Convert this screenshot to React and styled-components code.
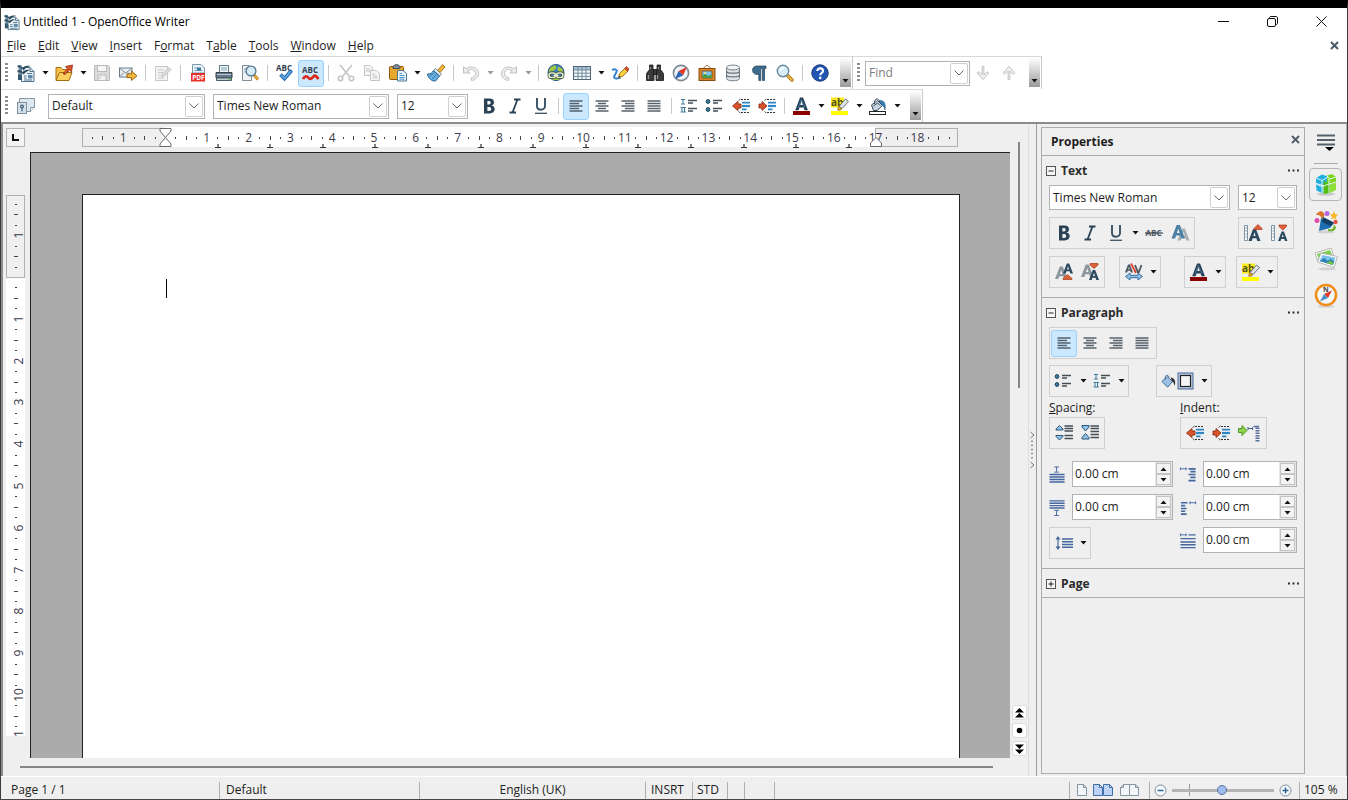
import React, { useEffect, useState } from "react";
import styled, { createGlobalStyle, css } from "styled-components";

const GlobalStyle = createGlobalStyle`
  * { box-sizing: border-box; }
  body {
    margin: 0;
    font-family: "Open Sans", "Noto Sans", sans-serif;
    font-size: 12px;
    line-height: 16px;
    color: #1d1d1d;
  }
  button, input, select {
    font: inherit;
    color: inherit;
  }
  svg { display: block; }
`;

/* ---------- icons ---------- */

const rows = (list, color = "#56616b", w = 1.5) => (
  <g stroke={color} strokeWidth={w}>
    {list.map(([x1, x2, y]) => (
      <path key={`${x1}-${y}`} d={`M${x1} ${y}H${x2}`} />
    ))}
  </g>
);

const writerDoc = (
  <g>
    <path d="M1.500 1V16H4.500V1Z" fill="#6f8ea2" />
    <path d="M4.500 3.500H13L17 7.500V17.500H4.500Z" fill="#edf3f6" stroke="#55758a" />
    <path d="M13 3.500V7.500H17" fill="none" stroke="#55758a" />
    <path d="M0.500 1.500C3 1 4.500 2.500 5.500 4C7.500 1.800 10.500 1.500 13.500 2C11 2.800 8.500 4 6.500 6.500C5 4 3 2.800 0.500 3.500Z" fill="#2c4a5e" />
    <path d="M0.500 6.500C3 5.500 4.500 6.800 5.500 8C7.500 6 10 5.500 13 6C10.500 7 8.500 8 6.500 10.500C5 8.500 3 7.800 0.500 8.500Z" fill="#2c4a5e" />
    <path d="M1 10.500C2.500 10 4 11 5 12.500V16H1Z" fill="#35566c" />
    <path d="M10 9.500H15M7 12H9.500M7 14H9.500M7 16H15" stroke="#4b7591" />
    <rect x="11" y="11" width="4.500" height="3.500" fill="#5d8aa8" />
  </g>
);

const bucket = (
  <g>
    <path d="M2.500 8L8.500 3.500L13.500 8.500L8 13.500H4.500Z" fill="#c9d6e2" stroke="#34495b" />
    <path d="M4.500 9L8.500 6L11 8.500M5.500 7C4.500 1.500 10 0 10.500 5" fill="none" stroke="#34495b" />
    <path d="M10.500 3.500C16 3 17 8 16 13C15 9.500 14 8.500 12.500 8Z" fill="#2f80bd" stroke="#1f4c70" strokeWidth="0.500" />
  </g>
);

const redUp = <path d="M14 0.500L18 4.500V5.500H10V4.500Z" fill="#e0603a" stroke="#a63a1a" strokeWidth="0.700" />;

const letterA = (x, y, s, color) => (
  <g transform={`translate(${x} ${y}) scale(${s})`}>
    <path d="M0 10L3.800 0H6.200L10 10H7.300L6.600 7.800H3.400L2.700 10ZM4 5.900H6L5 2.800Z" fill={color} fillRule="evenodd" />
  </g>
);

const arrowLeftRed = (
  <path d="M0.500 9L6 4.500V7H9V11H6V13.500Z" fill="#d9532c" stroke="#8c2f14" strokeWidth="0.900" />
);
const arrowRightRed = (
  <path d="M9 9L4 4.500V7H1V11H4V13.500Z" fill="#d9532c" stroke="#8c2f14" strokeWidth="0.900" />
);
const indentLines = (
  <g>
    <path d="M9 2.500H18M9 15.500H18" stroke="#333" strokeDasharray="2 1" />
    <path d="M10 5.700H18M10 12.300H14.500" stroke="#2c86c6" strokeWidth="1.800" />
    <path d="M10 9H18" stroke="#2c86c6" strokeWidth="2.200" />
    <path d="M6.500 3.500L8.500 2M6.500 14.500L8.500 16" stroke="#555" />
  </g>
);

const highlight = (
  <g>
    <rect x="0" y="0.500" width="13" height="10" fill="#fdec1c" />
    <text x="0" y="9" fontSize="10" fontWeight="700" fill="#54511c">ab</text>
    <path d="M8 9.500L14.500 2L17.500 4.500L11 11.500Z" fill="#dfe3e6" stroke="#5b6770" strokeWidth="0.900" />
    <path d="M7.500 9L11 12L8.500 13.500L6.500 13Z" fill="#e0a020" stroke="#7d5b12" strokeWidth="0.500" />
    <rect x="0" y="14" width="17" height="4" fill="#ffff00" />
  </g>
);

const fontColor = (
  <g>
    {letterA(2.200, 0.500, 1.270, "#24425a")}
    <path d="M5 11L8.500 2.500L12 11" fill="none" stroke="#5b86a6" strokeWidth="0.700" />
    <rect x="0" y="14" width="17" height="4" fill="#8b0000" />
  </g>
);

const bulletLines = (
  <g>
    <circle cx="2" cy="4.500" r="1.900" fill="#3f7c9d" stroke="#1f4256" />
    <circle cx="2" cy="12.500" r="1.900" fill="#3f7c9d" stroke="#1f4256" />
    {rows([[7, 16, 3.5], [7, 12, 6], [7, 16, 11.5], [7, 12, 14]], "#454e55")}
  </g>
);

const numberLines = (
  <g>
    <path d="M1 2.500H5M3 2.500V7M1 7H5M0.500 10.500H6M2 10.500V15M4.500 10.500V15M0.500 15H6" stroke="#3f7c9d" />
    {rows([[8, 17, 3.5], [8, 13, 6], [8, 17, 11.5], [8, 13, 14]], "#454e55")}
  </g>
);

const glyphs = {
  doc: writerDoc,
  open: (
    <g>
      <path d="M1 16V3.500H6L7.500 5.500H13V16Z" fill="#f6c24a" stroke="#a76f13" />
      <path d="M1 16.500L4.500 8.500H17L14 16.500Z" fill="#fbcf5d" stroke="#a76f13" />
      <path d="M8 9.500L12.500 5L10.500 2.500L17.500 1L16.500 8L14.500 6.200L10 10.500Z" fill="#d9542a" stroke="#8e2c10" strokeWidth="0.800" />
    </g>
  ),
  save: (
    <g fill="none" stroke="#b9b9b9">
      <path d="M1.500 1.500H15L16.500 3V16.500H1.500Z" fill="#dcdcdc" />
      <rect x="4.500" y="1.500" width="9" height="6" fill="#f7f7f7" />
      <rect x="5" y="11" width="8" height="5.500" fill="#f3f3f3" />
      <path d="M7 12.500V15" />
    </g>
  ),
  mail: (
    <g>
      <rect x="0.500" y="4" width="12.500" height="9" fill="#e9eff3" stroke="#6b7d8b" />
      <path d="M1 4.500L6.800 9L12.500 4.500M1 12.500L5 8.500M12.500 12.500L9 8.500" fill="none" stroke="#6b7d8b" strokeWidth="0.900" />
      <path d="M8 9.800H12.500V7L18 11.800L12.500 16.500V13.700H8Z" fill="#f3b93a" stroke="#8c5c0e" strokeWidth="0.900" />
    </g>
  ),
  edit: (
    <g stroke="#c8c8c8" fill="none">
      <rect x="1.500" y="2.500" width="12" height="14" fill="#f3f3f3" />
      <path d="M4 6H10M4 8.500H9M4 11H7M4 14H10" />
      <path d="M7.500 13L8.500 10L15 3.500L17 5.500L10.500 12Z" fill="#dadada" />
    </g>
  ),
  pdf: (
    <g>
      <path d="M3.500 0.500H12L15.500 4V9H3.500Z" fill="#eaf2f7" stroke="#7b98a8" />
      <path d="M5.500 4H9M5.500 6.500H13" stroke="#6aa0c0" />
      <rect x="8" y="3.500" width="4" height="3" fill="#3c7ba0" />
      <rect x="2" y="9" width="14" height="8.500" fill="#e5302c" />
      <text x="3.200" y="15.800" fontSize="6.500" fontWeight="700" fill="#fff">PDF</text>
    </g>
  ),
  print: (
    <g>
      <path d="M4.500 8V1.500H13.500V8" fill="#f7fafc" stroke="#5e7382" />
      <path d="M6 4H12M6 6H12" stroke="#7aa0b8" />
      <path d="M1 8.500H17V14H1Z" fill="#65798a" stroke="#34444f" />
      <path d="M2 10.500H16" stroke="#b8c7d1" />
      <path d="M1.500 14H16.500V16.500H1.500Z" fill="#c4ced5" stroke="#4a5b67" />
      <circle cx="14.500" cy="15.200" r="1" fill="#57b544" />
    </g>
  ),
  preview: (
    <g>
      <path d="M1.500 1.500H8L10.500 4V16.500H1.500Z" fill="#eef3f6" stroke="#7d8c97" />
      <path d="M3 5H6M3 8H5" stroke="#8aa2b1" />
      <path d="M13 11L17 15.500" stroke="#a8701c" strokeWidth="3" />
      <path d="M13.500 11.500L16.800 15.200" stroke="#f1b73d" strokeWidth="1.600" />
      <circle cx="10" cy="7" r="4.900" fill="#d5ecf7" stroke="#55768d" strokeWidth="1.300" />
    </g>
  ),
  spell: (
    <g>
      <text x="0" y="6.500" fontSize="8" fontWeight="700" fill="#33414d">ABC</text>
      <path d="M4.500 10.500L8.500 14.500L15.500 6.500" fill="none" stroke="#1f62a0" strokeWidth="3.800" />
      <path d="M5 11L8.500 14.300L15 7" fill="none" stroke="#58a5e0" strokeWidth="2" />
    </g>
  ),
  autospell: (
    <g>
      <text x="0" y="9" fontSize="8" fontWeight="700" fill="#33414d">ABC</text>
      <path d="M1 15C3 11.500 5 12 6.500 13.800S10 14.500 11.500 12.500S14.500 12.500 16.500 15" fill="none" stroke="#d92a1c" strokeWidth="2.800" />
    </g>
  ),
  cut: (
    <g fill="none" stroke="#c4c4c4" strokeWidth="1.600">
      <path d="M3 1L12.500 12.500M15 1L5.500 12.500" />
      <circle cx="3.500" cy="14.500" r="2.200" />
      <circle cx="14.500" cy="14.500" r="2.200" />
    </g>
  ),
  copy: (
    <g stroke="#c4c4c4" fill="#f6f6f6">
      <path d="M1.500 1.500H7L9.500 4V11.500H1.500Z" />
      <path d="M3 5H7M3 7H7" />
      <path d="M7.500 6.500H13.500L16.500 9.500V16.500H7.500Z" />
      <path d="M9.500 10H12M9.500 12H14.500M9.500 14H14.500" />
    </g>
  ),
  paste: (
    <g>
      <rect x="0.500" y="2.500" width="14" height="13" rx="1" fill="#e7a62c" stroke="#8a5a12" />
      <path d="M4 4.500V2.500L6 0.800H9L11 2.500V4.500Z" fill="#7f8d96" stroke="#46525a" />
      <path d="M8.500 6.500H14L17.500 9.500V17H8.500Z" fill="#e8f3fa" stroke="#4f7690" />
      <path d="M10.500 9.500H13M10.500 11.500H15.500M10.500 13.500H15.500M10.500 15.200H15.500" stroke="#4c93c2" />
    </g>
  ),
  brush: (
    <g>
      <path d="M10.500 6.500L15.500 0.500L18 3L13 8.500Z" fill="#f2b632" stroke="#956211" strokeWidth="0.800" />
      <path d="M8.500 4.500L14.500 10L12.500 12L6.500 6.500Z" fill="#e7edf1" stroke="#51646f" strokeWidth="0.800" />
      <path d="M6.500 6.500L12.500 12L8.500 17C5 17.500 1 14.500 0.500 10C4 10 5 9 6.500 6.500Z" fill="#6db0e2" stroke="#235e91" />
      <path d="M3 11.500C5 11 6.500 10 7.500 8.500M5 14.500C7 13.500 8.500 12 9.500 10.500" stroke="#2c70a8" fill="none" />
    </g>
  ),
  undo: (
    <path d="M1.500 2.500V9H8L5.800 6.800C9 4.500 13.500 5.500 13.500 9.500C13.500 12 11.500 13.500 9 14L9.500 16.500C13.500 16 16.500 13.500 16.500 9.500C16.500 3.500 9 1 4 4.800Z" fill="#ececec" stroke="#c2c2c2" />
  ),
  redo: (
    <path d="M16.500 2.500V9H10L12.200 6.800C9 4.500 4.500 5.500 4.500 9.500C4.500 12 6.500 13.500 9 14L8.500 16.500C4.500 16 1.500 13.500 1.500 9.500C1.500 3.500 9 1 14 4.800Z" fill="#ececec" stroke="#c2c2c2" />
  ),
  globe: (
    <g>
      <circle cx="9" cy="8.500" r="8" fill="#3e7fc0" stroke="#1f4e7c" />
      <path d="M4 3L8.500 1L9.500 4L6.500 7L2 8C1.800 6.500 2.500 4.500 4 3ZM11 2.500L15 4.500L16.500 9L13 8.500L10.500 6ZM4 14H14L12 16L6 16Z" fill="#a3c644" />
      <rect x="2" y="9" width="6.500" height="4.500" rx="2.200" fill="none" stroke="#33452a" strokeWidth="2.800" />
      <rect x="9.500" y="9" width="6.500" height="4.500" rx="2.200" fill="none" stroke="#33452a" strokeWidth="2.800" />
      <rect x="2" y="9" width="6.500" height="4.500" rx="2.200" fill="none" stroke="#e7edd4" strokeWidth="1.500" />
      <rect x="9.500" y="9" width="6.500" height="4.500" rx="2.200" fill="none" stroke="#e7edd4" strokeWidth="1.500" />
      <path d="M6.500 11.300H11.500" stroke="#e7edd4" strokeWidth="1.400" />
    </g>
  ),
  table: (
    <g>
      <rect x="0.500" y="2.500" width="17" height="13" fill="#f5f8fa" stroke="#4f6674" />
      <rect x="1" y="3" width="16" height="3" fill="#aac2d2" />
      <path d="M1 6H17M1 9.200H17M1 12.400H17M5 3V15M9 3V15M13 3V15" stroke="#6f8b9d" />
    </g>
  ),
  draw: (
    <g>
      <path d="M1 6C4 4.500 7 5.500 5 9C3.500 12 1.500 14 5 14.500C7 14.800 8 14 9.500 13.500" fill="none" stroke="#2f7fd6" strokeWidth="1.900" />
      <path d="M7.500 13.500L8.500 9.500L14 4L17 7L11.500 12.500Z" fill="#f8cf3d" stroke="#8a5a12" strokeWidth="0.800" />
      <path d="M13.500 4.500L15.500 2.500L18 5L16.500 7.200Z" fill="#e4523c" stroke="#8e2c10" strokeWidth="0.700" />
      <path d="M7.500 13.500L8 11.500L9.500 13Z" fill="#333" />
    </g>
  ),
  binoculars: (
    <g fill="#3a3a3a" stroke="#161616" strokeWidth="0.800">
      <path d="M3.500 1H7V5.500L8 8V16.500H0.500V9.500L3.500 5.500Z" />
      <path d="M14.500 1H11V5.500L10 8V16.500H17.500V9.500L14.500 5.500Z" />
      <rect x="7.500" y="5.500" width="3" height="5" />
      <path d="M2.500 11V15M11.500 11V15M4.500 3V5M12.500 3V5" stroke="#9a9a9a" strokeWidth="1.200" />
    </g>
  ),
  compass: (
    <g>
      <circle cx="9" cy="9" r="7.600" fill="#eef4f8" stroke="#7d8a94" strokeWidth="1.600" />
      <path d="M15 3L11 11.500L6.500 7Z" fill="#e0392a" />
      <path d="M3 15L6.500 7L11 11.500Z" fill="#2a66b5" />
    </g>
  ),
  gallery: (
    <g>
      <path d="M5 4.500L9 1L13 4.500" fill="none" stroke="#98784a" />
      <rect x="1" y="4.500" width="16" height="12" fill="#d98327" stroke="#8a4c10" />
      <rect x="4" y="7" width="10" height="7" fill="#7cc0ea" stroke="#7a430e" strokeWidth="0.700" />
      <path d="M4.400 13.700V11.500L7 10L10 12L13.600 10.500V13.700Z" fill="#3f9c3a" />
      <circle cx="7" cy="9" r="1" fill="#fdf17a" />
    </g>
  ),
  database: (
    <g fill="#dfe3e6" stroke="#66727b" strokeWidth="0.900">
      <path d="M2.500 3.500V14.500C2.500 17.500 15.500 17.500 15.500 14.500V3.500" />
      <ellipse cx="9" cy="3.500" rx="6.500" ry="2.400" fill="#f3f5f6" />
      <path d="M2.500 7.200C2.500 9.800 15.500 9.800 15.500 7.200M2.500 11C2.500 13.500 15.500 13.500 15.500 11" fill="none" strokeWidth="1.300" />
    </g>
  ),
  pilcrow: (
    <path d="M7 2H16V4.500H14.500V16.500H12.500V4.500H10.800V16.500H8.800V10.500C5 10.800 2.500 9.200 2.500 6.300C2.500 3.500 4.500 2 7 2Z" fill="#3d6c8e" stroke="#1f4059" strokeWidth="0.700" />
  ),
  zoom: (
    <g>
      <path d="M11 11L16 16" stroke="#99661a" strokeWidth="3.400" strokeLinecap="round" />
      <path d="M11.800 11.800L16 16" stroke="#f3b93a" strokeWidth="1.900" strokeLinecap="round" />
      <circle cx="7" cy="7" r="5.700" fill="#d8effa" stroke="#6c8799" strokeWidth="1.400" />
      <path d="M4 6.500C4.500 4.500 6 3.800 8 4" stroke="#fff" strokeWidth="1.400" fill="none" />
    </g>
  ),
  help: (
    <g>
      <circle cx="9" cy="9" r="8.200" fill="#2456b4" stroke="#16366f" />
      <path d="M6.300 7C6.300 3.500 12 3.600 12 6.900C12 9 9.200 9 9.200 11.300" fill="none" stroke="#fff" strokeWidth="2.100" />
      <circle cx="9.200" cy="13.900" r="1.300" fill="#fff" />
    </g>
  ),
  down: <path d="M8 1.500H10V11L14 7.500L15.500 9L9 16.500L2.500 9L4 7.500L8 11Z" fill="#f0f0f0" stroke="#bcbcbc" />,
  up: <path d="M8 16.500H10V7L14 10.500L15.500 9L9 1.500L2.500 9L4 10.500L8 7Z" fill="#f0f0f0" stroke="#bcbcbc" />,
  styles: (
    <g>
      <path d="M2.500 1.500H17.500V10.500L13.500 14.500H2.500Z" fill="#dfe8ee" stroke="#8396a3" />
      <path d="M13.500 14.500V10.500H17.500" fill="#f8fbfd" stroke="#8396a3" />
      <rect x="0.500" y="5.500" width="9" height="11" fill="#d5e0e8" stroke="#7d92a1" />
      <path d="M5 14.500V8.500" stroke="#41617a" strokeWidth="1.200" />
      <circle cx="5" cy="9.500" r="2" fill="#41617a" />
      <circle cx="5" cy="9.500" r="0.700" fill="#e8eff4" />
    </g>
  ),
  bold: (
    <path d="M4 1.500H9.500C12.500 1.500 14 3.200 14 5.300C14 7 13.100 8.200 11.500 8.600C13.600 9 14.700 10.300 14.700 12.100C14.700 14.800 12.700 16.500 9.600 16.500H4ZM7.400 4V7.500H8.900C10 7.500 10.600 6.800 10.600 5.800C10.600 4.600 10 4 8.900 4ZM7.400 10V14H9.200C10.500 14 11.200 13.200 11.200 12C11.200 10.700 10.400 10 9.200 10Z" fill="#2a4254" fillRule="evenodd" />
  ),
  italic: <path d="M8 2.500H14.500M3.500 15.500H10M11.500 2.500L6.500 15.500" stroke="#2a4254" strokeWidth="1.800" fill="none" />,
  underline: (
    <g fill="none" stroke="#3a5163">
      <path d="M5 1V9C5 14 13 14 13 9V1" strokeWidth="1.900" />
      <path d="M3 16.300H15" strokeWidth="1.300" />
    </g>
  ),
  alignLeft: rows([[2.5, 15.5, 4], [2.5, 12, 6.5], [2.5, 15.5, 9], [2.5, 12, 11.5], [2.5, 15.5, 14]]),
  alignCenter: rows([[2.5, 15.5, 4], [5, 13, 6.5], [2.5, 15.5, 9], [5, 13, 11.5], [2.5, 15.5, 14]]),
  alignRight: rows([[2.5, 15.5, 4], [6, 15.5, 6.5], [2.5, 15.5, 9], [6, 15.5, 11.5], [2.5, 15.5, 14]]),
  justify: rows([[2.5, 15.5, 4], [2.5, 15.5, 6.5], [2.5, 15.5, 9], [2.5, 15.5, 11.5], [2.5, 15.5, 14]]),
  numbering: numberLines,
  bullets: bulletLines,
  outdent: <g>{indentLines}{arrowLeftRed}</g>,
  indent: <g>{indentLines}{arrowRightRed}</g>,
  fontColor,
  highlight,
  fill: (
    <g>
      {bucket}
      <rect x="0.500" y="14.500" width="16" height="3" fill="#fff" stroke="#222" />
    </g>
  ),
  strike: (
    <g>
      <text x="0.500" y="12" fontSize="8" fontWeight="700" fill="#4a5660">ABC</text>
      <path d="M0 9H18" stroke="#39434b" strokeWidth="1.200" />
    </g>
  ),
  shadow: (
    <g>
      {letterA(6.500, 4.500, 1.200, "#a7afb5")}
      {letterA(0.500, 1, 1.350, "#4b81a6")}
    </g>
  ),
  grow: (
    <g>
      <path d="M0.500 1.500H3.500V16.500H0.500ZM1.500 4H3M1.500 7H3M1.500 10H3M1.500 13H3" fill="#fff" stroke="#6c8799" strokeWidth="0.900" />
      {letterA(4.500, 5, 1.200, "#2b4a61")}
      {redUp}
    </g>
  ),
  shrink: (
    <g>
      <path d="M1.500 1.500H4.500V16.500H1.500ZM2.500 4H4M2.500 7H4M2.500 10H4M2.500 13H4" fill="#fff" stroke="#6c8799" strokeWidth="0.900" />
      {letterA(8, 7.500, 0.950, "#2b4a61")}
      <path d="M9 1H16.500V2.500L12.800 6L9 2.500Z" fill="#e0603a" stroke="#a63a1a" strokeWidth="0.700" />
    </g>
  ),
  superscript: (
    <g>
      {letterA(0, 3.500, 1.250, "#8d979e")}
      {letterA(8, 0.500, 1, "#2b4a61")}
      <path d="M12.500 11.500L17 15.500V16.500H8V15.500Z" fill="#e0603a" stroke="#a63a1a" strokeWidth="0.700" />
    </g>
  ),
  subscript: (
    <g>
      {letterA(0, 1.500, 1.250, "#8d979e")}
      {letterA(8, 7, 1, "#2b4a61")}
      <path d="M9 0.500H17V2L13 5.500L9 2Z" fill="#e0603a" stroke="#a63a1a" strokeWidth="0.700" />
    </g>
  ),
  charSpacing: (
    <g>
      {letterA(0, 1.500, 0.800, "#4a5660")}
      <path d="M10 2L12.800 9H13.800L16.500 2" fill="none" stroke="#4a5660" strokeWidth="1.800" />
      <path d="M6 0.500L11 10" stroke="#e0392a" strokeWidth="1.700" />
      <path d="M0.500 13.500L5 10V12.300H13V10L17.500 13.500L13 17V14.700H5V17Z" fill="#8fc3e8" stroke="#2a6393" strokeWidth="0.900" />
    </g>
  ),
  paraFill: (
    <g>
      <path d="M1 9.500L7 4L13 9.500L7.500 16Z" fill="#9dc1e6" stroke="#35618f" />
      <path d="M5 7.500C3.500 2 8.500 0.500 9 5.500" fill="none" stroke="#35618f" />
      <path d="M11 5C15 5.500 17 9 15.500 14.500C14.500 11 13.500 10 12 9Z" fill="#333" />
    </g>
  ),
  square: (
    <g>
      <rect x="1" y="1" width="15" height="16" fill="#b9c8de" stroke="#4a6999" />
      <rect x="3.500" y="3.500" width="10" height="11" fill="#f4f4f4" stroke="#222" strokeWidth="1.200" />
    </g>
  ),
  spaceUp: (
    <g>
      <path d="M4.500 1.500L8 5V6H1V5ZM4.500 16L8 12.500V11.500H1V12.500Z" fill="#8fc3e8" stroke="#2a5577" />
      {rows([[9.5, 18, 2], [9.5, 18, 4.5], [9.5, 18, 7], [9.5, 18, 11.5], [9.5, 18, 14.5]], "#454e55")}
    </g>
  ),
  spaceDown: (
    <g>
      <path d="M4.500 7L8 3V1.500H1V3ZM4.500 9.500L8 13.500V15H1V13.500Z" fill="#8fc3e8" stroke="#2a5577" />
      {rows([[9.5, 18, 2], [9.5, 18, 4.5], [9.5, 18, 7.5], [9.5, 18, 10.5], [9.5, 18, 13.5]], "#454e55")}
    </g>
  ),
  hanging: (
    <g>
      <path d="M0.500 4.500H4V1.500L9 6.500L4 11.500V8.500H0.500Z" fill="#8ed44a" stroke="#3f8a17" strokeWidth="0.900" />
      <path d="M10 4.500H14.500M10 3V6M14.500 3V6" stroke="#4a6288" />
      <path d="M15.500 2.500H21" stroke="#5a73a0" strokeWidth="1.600" />
      <path d="M19.500 3.500V18" stroke="#5a73a0" strokeWidth="4" strokeDasharray="1.500 1" />
    </g>
  ),
  above: (
    <g stroke="#4467a0">
      <path d="M5.500 1H10.500M8 1V6M5.500 6.500H10.500" />
      <path d="M0.500 9H16.500M0.500 11.700H16.500M0.500 14.300H16.500M0.500 17H16.500" strokeWidth="1.500" />
    </g>
  ),
  below: (
    <g stroke="#4467a0">
      <path d="M0.500 2H16.500M0.500 4.500H16.500M0.500 7H16.500M0.500 9.500H16.500" strokeWidth="1.500" />
      <path d="M5.500 12H10.500M8 12V17M5.500 17.500H10.500" />
    </g>
  ),
  before: (
    <g stroke="#4467a0">
      <path d="M0.500 3H6.500M0.500 1.500V4.500M6.500 1.500V4.500" />
      <path d="M9 3H16.500M11 6H16.500M9 9H16.500M11 12H16.500M9 15.500H16.500" strokeWidth="1.700" />
    </g>
  ),
  after: (
    <g stroke="#4467a0">
      <path d="M10.500 4H16.500M10.500 2.500V5.500M16.500 2.500V5.500" />
      <path d="M1 4H8M1 7H5.500M1 10H7M1 13H5.500M1 16H7" strokeWidth="1.700" />
    </g>
  ),
  firstLine: (
    <g stroke="#4467a0">
      <path d="M0.500 3H6.500M0.500 1.500V4.500M6.500 1.500V4.500" />
      <path d="M9 3H16.500M0.500 7H16.500M0.500 10.500H16.500M0.500 13.500H16.500M0.500 16.500H16.500" strokeWidth="1.500" />
    </g>
  ),
  lineSpacing: (
    <g stroke="#4467a0">
      <path d="M3 4V14" strokeWidth="1.200" />
      <path d="M3 2L5.500 5.500H0.500ZM3 16L5.500 12.500H0.500Z" fill="#4467a0" stroke="none" />
      <path d="M7 5H18M7 7.800H18M7 10.500H18M7 13.300H18" strokeWidth="1.400" />
    </g>
  ),
};

const Icon = ({ name, size = 18 }) => (
  <svg width={size} height={size} viewBox="0 0 18 18" overflow="visible" aria-hidden="true">
    {glyphs[name]}
  </svg>
);

const Caret = ({ color = "#111" }) => (
  <svg width="7" height="4" viewBox="0 0 7 4" aria-hidden="true">
    <path d="M0.500 0H6.500L3.500 3.500Z" fill={color} />
  </svg>
);

/* ---------- window frame ---------- */

const Window = styled.div`
  display: flex;
  flex-direction: column;
  height: 100vh;
  overflow: hidden;
  background: #fff;
  border-top: 8px solid #000;
  border-left: 1px solid #3c3c3c;
  border-right: 1px solid #3c3c3c;
  border-bottom: 1px solid #4a4444;
`;

const TitleBar = styled.header`
  display: flex;
  align-items: center;
  flex: none;
  height: 27px;
  padding: 0 3px;
  gap: 3px;
`;

const Title = styled.h1`
  flex: 1;
  margin: 0;
  font-size: 12px;
  font-weight: 400;
  color: #000;
`;

const CaptionButton = styled.button`
  display: flex;
  align-items: center;
  justify-content: center;
  width: 46px;
  height: 25px;
  padding: 0;
  border: 0;
  background: none;
`;

const MenuBar = styled.nav`
  display: flex;
  flex: none;
  height: 21px;
  align-items: center;
`;

const MenuItem = styled.button`
  padding: 0 6px;
  border: 0;
  background: none;
`;

const CloseDocument = styled.button`
  display: flex;
  margin-left: auto;
  padding: 0 8px;
  border: 0;
  background: none;
`;

/* ---------- toolbars ---------- */

const ToolbarRow = styled.div`
  display: flex;
  flex: none;
  height: 33px;
`;

const Toolbar = styled.div`
  display: flex;
  align-items: center;
  padding: 0 1px 0 4px;
  border-top: 1px solid #d9d9d9;
  border-right: 1px solid #c9c9c9;
`;

const Grip = styled.span`
  width: 3px;
  height: 20px;
  margin-right: 5px;
  background: repeating-linear-gradient(#8c8c8c 0 2px, transparent 2px 4px);
`;

const ToolButton = styled.button`
  display: flex;
  align-items: center;
  justify-content: center;
  flex: none;
  width: 26px;
  height: 27px;
  padding: 0;
  border: 1px solid transparent;
  border-radius: 3px;
  background: none;
  ${(p) =>
    p.$active &&
    css`
      border-color: #99d1ff;
      background: #cce8ff;
    `}
`;

const ArrowButton = styled.button`
  display: flex;
  align-items: center;
  justify-content: center;
  flex: none;
  width: 12px;
  height: 27px;
  padding: 0;
  border: 0;
  background: none;
`;

const Divider = styled.span`
  flex: none;
  width: 1px;
  height: 16px;
  margin: 0 4px;
  background: #c8c8c8;
`;

const Expander = styled.button`
  display: flex;
  align-items: flex-end;
  justify-content: center;
  width: 11px;
  height: 28px;
  margin-left: 7px;
  padding: 0 0 4px;
  border: 0;
  background: linear-gradient(#fbfbfb, #9b9b9b);
`;

const ComboBox = styled.label`
  display: flex;
  flex: ${(p) => (p.$width ? "none" : "1")};
  width: ${(p) => (p.$width ? `${p.$width}px` : "auto")};
  height: 25px;
  margin-right: ${(p) => p.$gap || 0}px;
  padding: 1px;
  border: 1px solid #b1b1b8;
  background: #fff;

  select, input {
    flex: 1;
    min-width: 0;
    padding: 0 2px;
    border: 0;
    outline: 0;
    appearance: none;
    background: none;
  }
  input::placeholder {
    color: #7c7c7c;
    opacity: 1;
  }
`;

const ComboArrow = styled.span`
  display: flex;
  align-items: center;
  justify-content: center;
  width: 18px;
  border: 1px solid #cfcfcf;
  border-radius: 2px;
  pointer-events: none;
`;

const Combo = ({ label, value, width, gap }) => (
  <ComboBox $width={width} $gap={gap}>
    <select aria-label={label} defaultValue={value}>
      <option>{value}</option>
    </select>
    <ComboArrow>
      <Chevron />
    </ComboArrow>
  </ComboBox>
);

const Chevron = () => (
  <svg width="10" height="6" viewBox="0 0 10 6" aria-hidden="true">
    <path d="M0.500 0.500L5 5L9.500 0.500" fill="none" stroke="#666" />
  </svg>
);

const standardTools = [
  ["doc", "New", "menu"],
  ["open", "Open", "menu"],
  ["save", "Save"],
  ["mail", "E-mail"],
  "|",
  ["edit", "Edit File"],
  "|",
  ["pdf", "Export as PDF"],
  ["print", "Print"],
  ["preview", "Page Preview"],
  "|",
  ["spell", "Spelling"],
  ["autospell", "AutoSpellcheck", "active"],
  "|",
  ["cut", "Cut"],
  ["copy", "Copy"],
  ["paste", "Paste", "menu"],
  ["brush", "Format Paintbrush"],
  "|",
  ["undo", "Undo", "menu-off"],
  ["redo", "Redo", "menu-off"],
  "|",
  ["globe", "Hyperlink"],
  ["table", "Insert Table", "menu"],
  ["draw", "Show Draw Functions"],
  "|",
  ["binoculars", "Find and Replace"],
  ["compass", "Navigator"],
  ["gallery", "Gallery"],
  ["database", "Data Sources"],
  ["pilcrow", "Nonprinting Characters"],
  ["zoom", "Zoom"],
  "|",
  ["help", "Help"],
];

const formatTools = [
  ["bold", "Bold"],
  ["italic", "Italic"],
  ["underline", "Underline"],
  "|",
  ["alignLeft", "Align Left", "active"],
  ["alignCenter", "Centered"],
  ["alignRight", "Align Right"],
  ["justify", "Justified"],
  "|",
  ["numbering", "Numbering On/Off"],
  ["bullets", "Bullets On/Off"],
  ["outdent", "Decrease Indent"],
  ["indent", "Increase Indent"],
  "|",
  ["fontColor", "Font Color", "menu"],
  ["highlight", "Highlighting", "menu"],
  ["fill", "Background Color", "menu"],
];

const Tools = ({ items }) =>
  items.map((item, i) => {
    if (item === "|") return <Divider key={i} />;
    const [name, label, mode = ""] = item;
    return (
      <React.Fragment key={name}>
        <ToolButton aria-label={label} $active={mode === "active"}>
          <Icon name={name} />
        </ToolButton>
        {mode.startsWith("menu") && (
          <ArrowButton aria-label={`${label} options`}>
            <Caret color={mode === "menu" ? "#111" : "#9a9a9a"} />
          </ArrowButton>
        )}
      </React.Fragment>
    );
  });

/* ---------- document area ---------- */

const Work = styled.main`
  display: flex;
  flex: 1;
  min-height: 0;
  border-top: 2px solid #8b8b8b;
  border-left: 2px solid #8b8b8b;
  background: #efefef;
`;

const Editor = styled.section`
  display: flex;
  flex-direction: column;
  flex: 1;
  min-width: 0;
`;

const RulerRow = styled.div`
  display: flex;
  flex: none;
  height: 28px;
  padding: 3px 0 0 3px;
  overflow: hidden;
`;

const TabButton = styled.button`
  flex: none;
  width: 19px;
  height: 19px;
  margin: 1px 57px 0 0;
  padding: 5px;
  border: 1px solid #b3b3b3;
  background: #f3f3f3;
`;

const CanvasRow = styled.div`
  display: flex;
  flex: 1;
  min-height: 0;
`;

const SideRuler = styled.div`
  flex: none;
  width: 27px;
  margin-bottom: 22px;
  padding: 43px 0 0 3px;
  overflow: hidden;
`;

const Canvas = styled.div`
  flex: 1;
  padding: 41px 0 0 51px;
  overflow: hidden;
  border-top: 1px solid #222;
  border-left: 1px solid #222;
  background: #ababab;
`;

const Paper = styled.article`
  width: 878px;
  height: 1242px;
  padding: 84px 83px;
  border: 1px solid #222;
  background: #fff;
`;

const TextCursor = styled.div`
  width: 1px;
  height: 19px;
  background: #000;
`;

const HScroll = styled.div`
  flex: none;
  height: 18px;
  padding: 8px 17px 0;
`;

const HThumb = styled.div`
  height: 2px;
  background: #868686;
`;

const VScroll = styled.div`
  display: flex;
  flex-direction: column;
  align-items: center;
  flex: none;
  width: 19px;
  padding: 18px 0 20px;
  gap: 3px;
  border-right: 1px solid #dedede;
`;

const VThumb = styled.div`
  width: 2px;
  height: 40%;
  margin-bottom: auto;
  background: #868686;
`;

const NavButton = styled.button`
  display: flex;
  align-items: center;
  justify-content: center;
  width: 15px;
  height: 15px;
  padding: 0;
  border: 1px solid #dcdcdc;
  border-radius: 3px;
  background: #fff;
`;

const Splitter = styled.div`
  display: flex;
  align-items: center;
  justify-content: center;
  flex: none;
  width: 8px;
  border-right: 1px solid #9c9c9c;
`;

const CM = 41.8;
const TAB = 52.6;

const HorizontalRuler = () => {
  const origin = 83;
  const marks = [];
  for (let q = -7; q < 76; q++) {
    const x = origin + (q * CM) / 4;
    if (q === 0) continue;
    if (q % 4 === 0) {
      marks.push(
        <text key={q} x={x} y="15" fontSize="12" textAnchor="middle" fill="#3a3a4a">
          {Math.abs(q / 4)}
        </text>
      );
    } else {
      const half = q % 2 === 0;
      marks.push(
        <path key={q} d={`M${Math.round(x) + 0.5} ${half ? 9 : 10}v${half ? 4 : 2}`} stroke="#444" />
      );
    }
  }
  return (
    <svg width="878" height="22" overflow="visible" aria-label="Horizontal ruler" role="img">
      <rect x="83" y="0" width="711" height="20" fill="#fff" />
      <rect x="0.500" y="1.500" width="83" height="18" fill="#efefef" stroke="#b0b0b0" />
      <rect x="793.500" y="1.500" width="82" height="18" fill="#efefef" stroke="#b0b0b0" />
      {marks}
      {Array.from({ length: 13 }, (_, k) => Math.round(origin + (k + 1) * TAB)).map((x) => (
        <path key={x} d={`M${x} 17v3M${x - 3} 20.500h6`} stroke="#333" strokeWidth="1.200" />
      ))}
      <g fill="#fff" stroke="#6a6a6a">
        <path d="M78 1.500H89V4L83.500 10.500L78 4Z" />
        <path d="M83.500 10.500L89 17V19.500H78V17Z" />
        <path d="M794 10.500L799.500 16V19.500H788.500V16Z" />
      </g>
    </svg>
  );
};

// last centimetre that still fits between the ruler's origin and the status bar
const lastVisibleCm = () => Math.min(25, Math.floor((window.innerHeight - 340) / CM));

const VerticalRuler = () => {
  const [last, setLast] = useState(lastVisibleCm);

  useEffect(() => {
    const update = () => setLast(lastVisibleCm());
    window.addEventListener("resize", update);
    return () => window.removeEventListener("resize", update);
  }, []);

  const origin = 82;
  const marks = [];
  for (let q = -7; q <= last * 4; q++) {
    const y = origin + (q * CM) / 4;
    if (q === 0) continue;
    if (q % 4 === 0) {
      marks.push(
        <text
          key={q}
          transform={`translate(17 ${Math.round(y)}) rotate(-90)`}
          fontSize="12"
          textAnchor="middle"
          fill="#3a3a4a"
        >
          {Math.abs(q / 4)}
        </text>
      );
    } else {
      const half = q % 2 === 0;
      marks.push(
        <path key={q} d={`M${half ? 8 : 9} ${Math.round(y) + 0.5}h${half ? 4 : 2}`} stroke="#444" />
      );
    }
  }
  return (
    <svg width="24" height="1200" aria-label="Vertical ruler" role="img">
      <rect width="19" height="1200" fill="#fff" />
      <rect x="0.500" y="0.500" width="18" height="82" fill="#efefef" stroke="#b0b0b0" />
      {marks}
    </svg>
  );
};

/* ---------- sidebar ---------- */

const Sidebar = styled.aside`
  display: flex;
  flex-direction: column;
  flex: none;
  width: 264px;
  margin: 3px 0 2px 4px;
  border: 1px solid #acacac;
`;

const Deck = styled.header`
  display: flex;
  align-items: center;
  justify-content: space-between;
  height: 28px;
  padding: 0 4px 0 9px;
  border-bottom: 1px solid #acacac;

  h2 {
    margin: 0;
    font-size: 12px;
    line-height: 16px;
  }
`;

const PlainButton = styled.button`
  display: flex;
  padding: 0;
  border: 0;
  background: none;
`;

const SectionHead = styled.div`
  display: flex;
  align-items: center;
  gap: 5px;
  height: 28px;
  padding: 1px 5px 0 4px;

  h3 {
    flex: 1;
    margin: 0;
    font-size: 12px;
    line-height: 16px;
    color: #2b2b2b;
  }
`;

const SectionBody = styled.div`
  padding: 1px 7px 9px;
`;

const SectionBox = styled.section`
  border-bottom: 1px solid #acacac;
`;

const Line = styled.div`
  display: flex;
  gap: ${(p) => p.$gap || 0}px;
  margin-top: ${(p) => p.$top || 0}px;
`;

const Push = styled.span`
  margin-left: ${(p) => p.$by || 0}px;
`;

const Group = styled.div`
  display: flex;
  align-items: center;
  width: max-content;
  height: 32px;
  padding: 0 1px;
  border: 1px solid #cfcfcf;
`;

const TwoCol = styled.div`
  display: grid;
  grid-template-columns: 124px 1fr;
  column-gap: 7px;
  row-gap: ${(p) => p.$gap || 0}px;
  margin-top: ${(p) => p.$top || 0}px;
  align-items: start;
`;

const Field = styled.label`
  display: flex;
  align-items: center;
  gap: 6px;
`;

const SpinBox = styled.span`
  display: flex;
  flex: 1;
  height: 26px;
  border: 1px solid #b1b1b8;
  background: #fff;

  input {
    flex: 1;
    width: 0;
    min-width: 0;
    padding: 0 2px;
    border: 0;
    outline: 0;
    background: none;
  }
`;

const SpinButtons = styled.span`
  display: flex;
  flex-direction: column;
  width: 17px;
  padding: 1px;
  background: #e6e6e6;
`;

const SpinButton = styled.button`
  display: flex;
  align-items: center;
  justify-content: center;
  flex: 1;
  padding: 0;
  border: 1px solid #c4c4c4;
  background: #f3f3f3;

  svg {
    transform: ${(p) => (p.$up ? "rotate(180deg)" : "none")};
  }
`;

const TabBar = styled.nav`
  display: flex;
  flex-direction: column;
  align-items: center;
  flex: none;
  width: 42px;
  padding-top: 10px;
  gap: 4px;
  border-right: 1px solid #b5b5b5;
`;

const TabRule = styled.span`
  width: 24px;
  height: 1px;
  margin: 7px 0 0;
  background: #acacac;
`;

const DeckTab = styled.button`
  display: flex;
  align-items: center;
  justify-content: center;
  width: 33px;
  height: 33px;
  padding: 0;
  border: 1px solid ${(p) => (p.$active ? "#b5b5b5" : "transparent")};
  border-radius: 4px;
  background: none;
`;

const Spin = ({ icon, label }) => (
  <Field>
    <Icon name={icon} size={17} />
    <SpinBox>
      <input aria-label={label} defaultValue="0.00 cm" />
      <SpinButtons>
        <SpinButton $up aria-label={`Increase ${label}`}>
          <Caret />
        </SpinButton>
        <SpinButton aria-label={`Decrease ${label}`}>
          <Caret />
        </SpinButton>
      </SpinButtons>
    </SpinBox>
  </Field>
);

const Section = ({ title, open, children }) => {
  const [expanded, setExpanded] = useState(open);
  return (
    <SectionBox>
      <SectionHead>
        <PlainButton aria-label={`Toggle ${title}`} onClick={() => setExpanded(!expanded)}>
          <svg width="10" height="10" viewBox="0 0 10 10">
            <rect x="0.500" y="0.500" width="9" height="9" fill="#f6f6f6" stroke="#555" />
            <path d={expanded ? "M2.500 5H7.500" : "M2.500 5H7.500M5 2.500V7.500"} stroke="#222" />
          </svg>
        </PlainButton>
        <h3>{title}</h3>
        <PlainButton aria-label={`${title} options`}>
          <svg width="11" height="3" viewBox="0 0 11 3" fill="#333">
            <path d="M0 0.500H2V2.500H0ZM4.500 0.500H6.500V2.500H4.500ZM9 0.500H11V2.500H9Z" />
          </svg>
        </PlainButton>
      </SectionHead>
      {expanded && children}
    </SectionBox>
  );
};

/* ---------- status bar ---------- */

const StatusBar = styled.footer`
  display: flex;
  align-items: center;
  flex: none;
  height: 23px;
  padding-top: 4px;
  border-top: 1px solid #fff;
  background: #efefef;
`;

const Cell = styled.div`
  display: flex;
  align-items: center;
  justify-content: ${(p) => (p.$center ? "center" : "flex-start")};
  gap: ${(p) => p.$gap || 0}px;
  flex: ${(p) => (p.$grow ? "1" : "none")};
  width: ${(p) => p.$width}px;
  height: 17px;
  padding-left: ${(p) => p.$pad || 0}px;
  border-right: ${(p) => (p.$last ? "0" : "1px solid #b0b0b0")};
  white-space: nowrap;
`;

const SliderWrap = styled.span`
  position: relative;
  display: flex;
  width: 102px;

  &::before {
    content: "";
    position: absolute;
    left: 17px;
    top: 2px;
    width: 1px;
    height: 12px;
    background: #999;
  }
`;

const Slider = styled.input`
  position: relative;
  width: 100%;
  height: 16px;
  margin: 0;
  appearance: none;
  background: none;

  &::-webkit-slider-runnable-track {
    height: 3px;
    background: #b4b4b4;
  }
  &::-webkit-slider-thumb {
    appearance: none;
    width: 10px;
    height: 10px;
    margin-top: -4px;
    border: 1px solid #5d7396;
    border-radius: 50%;
    background: #9fbcf0;
  }
`;

const ZoomIcon = ({ plus }) => (
  <svg width="13" height="13" viewBox="0 0 13 13" aria-hidden="true">
    <circle cx="6.500" cy="6.500" r="5.500" fill="#f7fafc" stroke="#7d8c97" />
    <path d={plus ? "M3.500 6.500H9.500M6.500 3.500V9.500" : "M3.500 6.500H9.500"} stroke="#2a6393" strokeWidth="1.500" />
  </svg>
);

const PageShape = ({ x, fill, stroke }) => (
  <path d={`M${x} 1.500h6l3 3v8h-9zM${x + 6} 1.500v3h3`} fill={fill} stroke={stroke} />
);

const menus = [
  ["", "F", "ile"],
  ["", "E", "dit"],
  ["", "V", "iew"],
  ["", "I", "nsert"],
  ["F", "o", "rmat"],
  ["T", "a", "ble"],
  ["", "T", "ools"],
  ["", "W", "indow"],
  ["", "H", "elp"],
];

const App = () => {
  const [zoom, setZoom] = useState(49);

  return (
    <Window>
      <GlobalStyle />

      <TitleBar>
        <Icon name="doc" size={16} />
        <Title>Untitled 1 - OpenOffice Writer</Title>
        <CaptionButton aria-label="Minimize">
          <svg width="11" height="11" stroke="#111"><path d="M0 5.500H11" /></svg>
        </CaptionButton>
        <CaptionButton aria-label="Restore">
          <svg width="11" height="11" fill="none" stroke="#111">
            <rect x="0.500" y="2.500" width="8" height="8" rx="1.500" />
            <path d="M2.500 2.500V2C2.500 1 3 0.500 4 0.500H9C10 0.500 10.500 1 10.500 2V7C10.500 8 10 8.500 9 8.500H8.500" />
          </svg>
        </CaptionButton>
        <CaptionButton aria-label="Close">
          <svg width="11" height="11" stroke="#111"><path d="M0.500 0.500L10.500 10.500M10.500 0.500L0.500 10.500" /></svg>
        </CaptionButton>
      </TitleBar>

      <MenuBar>
        {menus.map(([pre, key, post]) => (
          <MenuItem key={pre + key + post}>
            {pre}
            <u>{key}</u>
            {post}
          </MenuItem>
        ))}
        <CloseDocument aria-label="Close Document">
          <svg width="9" height="9" stroke="#4a5a68" strokeWidth="2"><path d="M1 1L8 8M8 1L1 8" /></svg>
        </CloseDocument>
      </MenuBar>

      <ToolbarRow>
        <Toolbar>
          <Grip />
          <Tools items={standardTools} />
          <Expander aria-label="Standard toolbar options">
            <Caret />
          </Expander>
        </Toolbar>
        <Toolbar>
          <Grip />
          <ComboBox $width={105}>
            <input type="text" placeholder="Find" aria-label="Find" />
            <ComboArrow>
              <Chevron />
            </ComboArrow>
          </ComboBox>
          <ToolButton aria-label="Find Next"><Icon name="down" size={16} /></ToolButton>
          <ToolButton aria-label="Find Previous"><Icon name="up" size={16} /></ToolButton>
          <Expander aria-label="Find toolbar options">
            <Caret />
          </Expander>
        </Toolbar>
      </ToolbarRow>

      <ToolbarRow>
        <Toolbar>
          <Grip />
          <ToolButton aria-label="Styles and Formatting"><Icon name="styles" /></ToolButton>
          <Push $by={9} />
          <Combo label="Apply Style" value="Default" width={157} gap={8} />
          <Combo label="Font Name" value="Times New Roman" width={176} gap={8} />
          <Combo label="Font Size" value="12" width={71} gap={8} />
          <Tools items={formatTools} />
          <Expander aria-label="Formatting toolbar options">
            <Caret />
          </Expander>
        </Toolbar>
      </ToolbarRow>

      <Work>
        <Editor>
          <RulerRow>
            <TabButton aria-label="Tab type">
              <svg width="7" height="7"><path d="M1 0V6H7" fill="none" stroke="#111" strokeWidth="2" /></svg>
            </TabButton>
            <HorizontalRuler />
          </RulerRow>
          <CanvasRow>
            <SideRuler>
              <VerticalRuler />
            </SideRuler>
            <Canvas>
              <Paper>
                <TextCursor />
              </Paper>
            </Canvas>
          </CanvasRow>
          <HScroll>
            <HThumb />
          </HScroll>
        </Editor>

        <VScroll>
          <VThumb />
          <NavButton aria-label="Previous Page">
            <svg width="9" height="10"><path d="M4.500 0L9 4.500H0ZM4.500 5L9 9.500H0Z" /></svg>
          </NavButton>
          <NavButton aria-label="Navigation">
            <svg width="7" height="7"><circle cx="3.500" cy="3.500" r="2.800" /></svg>
          </NavButton>
          <NavButton aria-label="Next Page">
            <svg width="9" height="10"><path d="M4.500 5L9 0.500H0ZM4.500 10L9 5.500H0Z" /></svg>
          </NavButton>
        </VScroll>

        <Splitter>
          <svg width="5" height="38" fill="none" stroke="#777">
            <path d="M0.500 1L4 4L0.500 7M0.500 31L4 34L0.500 37" />
            <path d="M2 9.500V30" strokeWidth="1.500" strokeDasharray="1.500 2.600" />
          </svg>
        </Splitter>

        <Sidebar>
          <Deck>
            <h2>Properties</h2>
            <PlainButton aria-label="Close Sidebar">
              <svg width="9" height="13" stroke="#4a5a68" strokeWidth="1.800"><path d="M1 1L8 8M8 1L1 8" /></svg>
            </PlainButton>
          </Deck>

          <Section title="Text" open>
            <SectionBody>
              <Line $gap={8}>
                <Combo label="Font" value="Times New Roman" />
                <Combo label="Size" value="12" width={59} />
              </Line>
              <Line $top={7}>
                <Group>
                  <Tools
                    items={[
                      ["bold", "Bold"],
                      ["italic", "Italic"],
                      ["underline", "Underline", "menu"],
                      ["strike", "Strikethrough"],
                      ["shadow", "Shadow"],
                    ]}
                  />
                </Group>
                <Push $by={43} />
                <Group>
                  <Tools items={[["grow", "Increase Font"], ["shrink", "Decrease Font"]]} />
                </Group>
              </Line>
              <Line $top={7}>
                <Group>
                  <Tools items={[["superscript", "Superscript"], ["subscript", "Subscript"]]} />
                </Group>
                <Push $by={14} />
                <Group>
                  <Tools items={[["charSpacing", "Character Spacing", "menu"]]} />
                </Group>
                <Push $by={23} />
                <Group>
                  <Tools items={[["fontColor", "Font Color", "menu"]]} />
                </Group>
                <Push $by={10} />
                <Group>
                  <Tools items={[["highlight", "Highlighting", "menu"]]} />
                </Group>
              </Line>
            </SectionBody>
          </Section>

          <Section title="Paragraph" open>
            <SectionBody>
              <Line>
                <Group>
                  <Tools
                    items={[
                      ["alignLeft", "Align Left", "active"],
                      ["alignCenter", "Centered"],
                      ["alignRight", "Align Right"],
                      ["justify", "Justified"],
                    ]}
                  />
                </Group>
              </Line>
              <Line $gap={27} $top={6}>
                <Group>
                  <Tools items={[["bullets", "Bullets", "menu"], ["numbering", "Numbering", "menu"]]} />
                </Group>
                <Group>
                  <Push $by={3} />
                  <Icon name="paraFill" size={16} />
                  <Icon name="square" />
                  <Push $by={3} />
                  <ArrowButton aria-label="Paragraph Background">
                    <Caret />
                  </ArrowButton>
                </Group>
              </Line>
              <TwoCol $gap={1} $top={3}>
                <span><u>S</u>pacing:</span>
                <span><u>I</u>ndent:</span>
                <Group>
                  <Tools items={[["spaceUp", "Increase Spacing"], ["spaceDown", "Decrease Spacing"]]} />
                </Group>
                <Group>
                  <Tools
                    items={[
                      ["outdent", "Decrease"],
                      ["indent", "Increase"],
                      ["hanging", "Hanging Indent"],
                    ]}
                  />
                  <Push $by={5} />
                </Group>
              </TwoCol>
              <TwoCol $gap={7} $top={12}>
                <Spin icon="above" label="Above Paragraph Spacing" />
                <Spin icon="before" label="Before Text Indent" />
                <Spin icon="below" label="Below Paragraph Spacing" />
                <Spin icon="after" label="After Text Indent" />
                <Group>
                  <Tools items={[["lineSpacing", "Line Spacing", "menu"]]} />
                </Group>
                <Spin icon="firstLine" label="First Line Indent" />
              </TwoCol>
            </SectionBody>
          </Section>

          <Section title="Page" open={false} />
        </Sidebar>

        <TabBar>
          <PlainButton aria-label="Sidebar Settings">
            <svg width="18" height="18">
              <path d="M0 1.500H18M0 6H18M0 10.500H18" stroke="#56616b" strokeWidth="2" />
              <path d="M8 13H17L12.500 17Z" />
            </svg>
          </PlainButton>
          <TabRule />
          <DeckTab $active aria-label="Properties">
            <svg width="22" height="23" viewBox="0 0 22 23">
              <ellipse cx="11" cy="21" rx="9" ry="1.800" fill="#ccc" />
              <path d="M1 5L7 1.500L13 3.500V10L8 12L1 10Z" fill="#23b0e0" />
              <path d="M12 2.500L17 1L21 4V10L15 12L12 10Z" fill="#7ed321" />
              <path d="M1 11L8 13V20.500L1.500 17.500Z" fill="#23b0e0" />
              <path d="M8.500 8L15 10.500V20L8.500 21Z" fill="#52bd12" />
              <path d="M15 12L21 10V17L15 20Z" fill="#8fe03a" />
              <path d="M1 5L7 7.500L13 4M7 7.500V20M1 11L7 13.500L14 11L21 9M14 6V20M12 3L15 6L21 4" fill="none" stroke="#eafbff" strokeWidth="0.900" />
            </svg>
          </DeckTab>
          <DeckTab aria-label="Styles and Formatting">
            <svg width="24" height="24" viewBox="0 0 24 24">
              <ellipse cx="12" cy="22" rx="9" ry="1.500" fill="#d2d2d2" />
              <path d="M2 5C5 0 10 0 10.500 6L7.500 9C7 5 5 5 2 5Z" fill="#d9742a" />
              <path d="M7 8L20 13L16 18L5 21Z" fill="#1d6fb0" />
              <path d="M9 7L20 12.500L17 16L8 12Z" fill="#133f66" />
              <path d="M14 19C18 20 21 18 19 14L22 17C22 21 17 22 14 21Z" fill="#6cb52d" />
              <circle cx="13" cy="3.500" r="2.500" fill="#b565e0" />
              <path d="M20 1L21.200 4L24 4.500L22 6.700L22.500 9.500L20 8.200L17.500 9.500L18 6.700L16 4.500L18.800 4Z" fill="#fbb62e" />
              <circle cx="3" cy="10.500" r="2.500" fill="#e04bb0" />
              <circle cx="21.500" cy="12" r="2.200" fill="#e8504c" />
            </svg>
          </DeckTab>
          <DeckTab aria-label="Gallery">
            <svg width="24" height="24" viewBox="0 0 24 24">
              <ellipse cx="13" cy="22" rx="9" ry="1.500" fill="#d2d2d2" />
              <path d="M1 6L17 1L20 10L4 15Z" fill="#f8f8f8" stroke="#b5b5b5" />
              <path d="M3 7L16 3L18 8L5 12Z" fill="#7ccf4a" />
              <path d="M7 6L23.500 9.500L20 20.500L3.500 15Z" fill="#fdfdfd" stroke="#b5b5b5" />
              <path d="M8.500 8L21.500 10.800L18.800 18L5.500 14Z" fill="#7cc0ea" />
              <path d="M5.500 14L10.500 11L13.500 14L17 12L20.200 14.500L18.800 18Z" fill="#2a7fb5" />
              <path d="M12 16L16.500 13.500L19.500 16L18.800 18Z" fill="#6cc04a" />
            </svg>
          </DeckTab>
          <DeckTab aria-label="Navigator">
            <svg width="24" height="25" viewBox="0 0 24 25">
              <ellipse cx="12" cy="23.500" rx="9" ry="1.300" fill="#d2d2d2" />
              <circle cx="12" cy="12" r="10" fill="#f4fafe" stroke="#ef8e1b" strokeWidth="2.600" />
              <text x="9" y="8.500" fontSize="7" fontWeight="700" fill="#444">N</text>
              <path d="M18 7.500L14 15L10 11Z" fill="#e0392a" />
              <path d="M6 18.500L10 11L14 15Z" fill="#4a90c8" />
            </svg>
          </DeckTab>
        </TabBar>
      </Work>

      <StatusBar>
        <Cell $width={219} $pad={10}>Page 1 / 1</Cell>
        <Cell $width={200} $pad={6}>Default</Cell>
        <Cell $width={226} $center>English (UK)</Cell>
        <Cell $width={47} $pad={5}>INSRT</Cell>
        <Cell $width={35} $pad={4}>STD</Cell>
        <Cell $width={17} />
        <Cell $width={30} />
        <Cell $grow />
        <Cell $width={80} $pad={7} $gap={6}>
          <svg width="10" height="14"><PageShape x={0.5} fill="#f3f6f9" stroke="#8796a3" /></svg>
          <svg width="21" height="14">
            <PageShape x={0.5} fill="#bcd3f5" stroke="#3f6ea8" />
            <PageShape x={10.5} fill="#bcd3f5" stroke="#3f6ea8" />
          </svg>
          <svg width="19" height="14" fill="#f3f6f9" stroke="#8796a3">
            <path d="M3.500 1.500H9.500V12.500H0.500V4.500ZM0.500 4.500H3.500V1.500M9.500 1.500H15.500L18.500 4.500V12.500H9.500M15.500 1.500V4.500H18.500" />
          </svg>
        </Cell>
        <Cell $width={150} $pad={4} $gap={5}>
          <PlainButton aria-label="Zoom Out"><ZoomIcon /></PlainButton>
          <SliderWrap>
            <Slider
              type="range"
              aria-label="Zoom"
              value={zoom}
              onChange={(e) => setZoom(Number(e.target.value))}
            />
          </SliderWrap>
          <PlainButton aria-label="Zoom In"><ZoomIcon plus /></PlainButton>
        </Cell>
        <Cell $width={47} $pad={4} $last>105 %</Cell>
      </StatusBar>
    </Window>
  );
};

export default App;
